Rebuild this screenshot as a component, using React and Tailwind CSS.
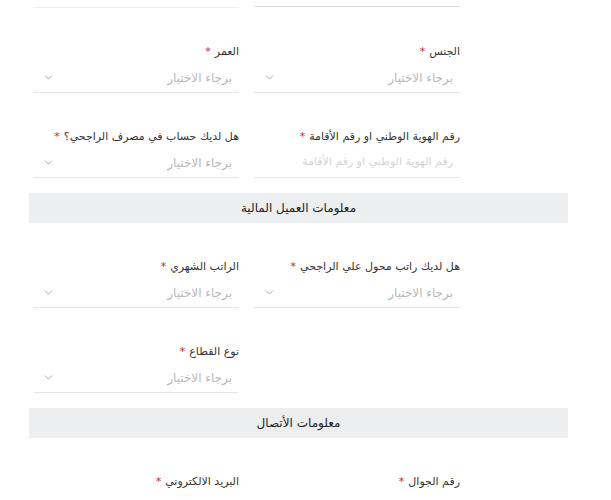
import { ChevronDown } from 'lucide-react';

const font = { fontFamily: '"DejaVu Sans", sans-serif' };

function Label({ text }) {
  return (
    <div className="h-[20px] flex items-center text-[11px] text-[#333] leading-none">
      <span>{text}</span>
      <span className="text-[#c62828] mr-[4px]">*</span>
    </div>
  );
}

function SelectField({ label }) {
  return (
    <div className="pt-[33px]">
      <Label text={label} />
      <div className="mt-[2px] h-[30px] border-b border-[#e6e6e6] flex items-center justify-between pr-[7px] pl-[9px]">
        <span className="text-[12px] text-[#b8b8b8]">برجاء الاختيار</span>
        <ChevronDown size={13} strokeWidth={1.5} className="text-[#9a9a9a]" />
      </div>
    </div>
  );
}

function InputField({ label, placeholder }) {
  return (
    <div className="pt-[33px]">
      <Label text={label} />
      <div className="mt-[2px] h-[30px] border-b border-[#e6e6e6] flex items-center pr-[7px]">
        <span className="text-[11px] text-[#d3d3d3]">{placeholder}</span>
      </div>
    </div>
  );
}

function SectionBar({ title }) {
  return (
    <div className="mt-[15px] h-[30px] bg-[#eceef0] flex items-center justify-center text-[12px] text-[#222]">
      {title}
    </div>
  );
}

function Grid({ children }) {
  return (
    <div className="grid grid-cols-2 gap-x-[15px] mr-[108px] ml-[4px]">{children}</div>
  );
}

export default function App() {
  return (
    <div dir="rtl" className="min-h-screen bg-white" style={font}>
      <div className="mr-[43px] ml-[29px] w-[539px]">
        <Grid>
          <div className="h-[7px] border-b border-[#dcdcdc]" />
          <div className="h-[8px] border-b border-[#eeeeee]" />
        </Grid>
        <Grid>
          <SelectField label="الجنس" />
          <SelectField label="العمر" />
          <InputField label="رقم الهوية الوطني او رقم الأقامة" placeholder="رقم الهوية الوطني او رقم الأقامة" />
          <SelectField label="هل لديك حساب في مصرف الراجحي؟" />
        </Grid>
        <SectionBar title="معلومات العميل المالية" />
        <Grid>
          <SelectField label="هل لديك راتب محول علي الراجحي" />
          <SelectField label="الراتب الشهري" />
          <div />
          <SelectField label="نوع القطاع" />
        </Grid>
        <SectionBar title="معلومات الأتصال" />
        <Grid>
          <div className="pt-[33px]"><Label text="رقم الجوال" /></div>
          <div className="pt-[33px]"><Label text="البريد الالكتروني" /></div>
        </Grid>
      </div>
    </div>
  );
}
